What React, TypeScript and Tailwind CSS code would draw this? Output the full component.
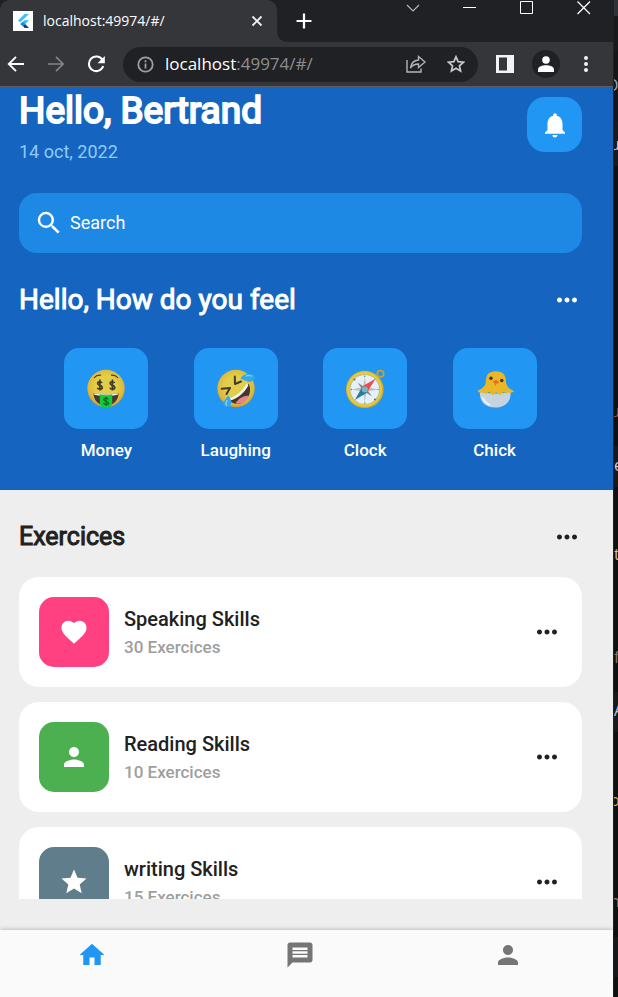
import type { ComponentType, ReactNode } from "react";
import {
  MdFavorite,
  MdHome,
  MdMessage,
  MdMoreHoriz,
  MdNotifications,
  MdPerson,
  MdSearch,
  MdStar,
} from "react-icons/md";

type IconType = ComponentType<{ size?: number; className?: string }>;

function FlutterLogo() {
  return (
    <span className="flex h-5 w-5 shrink-0 items-center justify-center bg-white">
      <svg width="16" height="16" viewBox="0 0 16 16" aria-hidden="true">
        <path d="M9.5 1H14L5.2 9.6 3 7.4z" fill="#42c0f5" />
        <path d="M9.5 7.3H14L10.2 11 8 13.2 5.2 11z" fill="#42b5f0" />
        <path d="M7.9 13.1L10.2 10.9 14 15H9.6z" fill="#0d3f91" />
        <path d="M5.5 11.1L7.8 8.9 10.1 11.1 7.8 13.3z" fill="#1b87d6" />
      </svg>
    </span>
  );
}

function WindowControls() {
  return (
    <div className="flex items-start pr-px text-white">
      <button type="button" aria-label="Search tabs" className="flex h-4 w-[57px] items-center justify-center">
        <svg width="14" height="14" viewBox="0 0 14 14" fill="none" stroke="#b5b6b8" strokeWidth="1.2">
          <path d="M1 4l6 6 6-6" />
        </svg>
      </button>
      <button type="button" aria-label="Minimize" className="flex h-4 w-[57px] items-center justify-center">
        <svg width="14" height="14" viewBox="0 0 14 14" fill="none" stroke="currentColor">
          <path d="M0 6.5h13" />
        </svg>
      </button>
      <button type="button" aria-label="Maximize" className="flex h-4 w-[57px] items-center justify-center">
        <svg width="14" height="14" viewBox="0 0 14 14" fill="none" stroke="currentColor">
          <path d="M.5.5h12v12H.5z" />
        </svg>
      </button>
      <button type="button" aria-label="Close window" className="flex h-4 w-[57px] items-center justify-center">
        <svg width="14" height="14" viewBox="0 0 14 14" fill="none" stroke="currentColor" strokeWidth="1.3">
          <path d="M.5.5l12.500 12.500M13 .5L.5 13" />
        </svg>
      </button>
    </div>
  );
}

function TabStrip() {
  return (
    <div className="flex h-[42px] bg-[#35363a]">
      <div className="w-[277px] bg-[#202124]">
        <div className="flex h-full items-center rounded-t-[10px] bg-[#35363a] pl-[13px] pr-[10px]">
          <FlutterLogo />
          <span className="ml-[10px] flex-1 text-[14px] leading-5 text-white">localhost:49974/#/</span>
          <button type="button" aria-label="Close tab" className="flex h-5 w-5 items-center justify-center">
            <svg width="12" height="12" viewBox="0 0 12 12" stroke="#f1f1f1" strokeWidth="1.9">
              <path d="M1.500 1.500l9 9M10.500 1.500l-9 9" />
            </svg>
          </button>
        </div>
      </div>
      <div className="flex flex-1 items-start justify-between rounded-bl-[10px] bg-[#202124]">
        <button type="button" aria-label="New tab" className="ml-4 flex h-[42px] w-[22px] items-center justify-center">
          <svg width="16" height="16" viewBox="0 0 16 16" stroke="#fff" strokeWidth="2.2">
            <path d="M8 .5v15M.5 8h15" />
          </svg>
        </button>
        <WindowControls />
      </div>
    </div>
  );
}

function Toolbar() {
  return (
    <div className="flex h-[45px] items-center border-b border-[#5c5d60] bg-[#35363a] pl-[6px] pr-[21px]">
      <button type="button" aria-label="Back" className="flex h-5 w-5 items-center justify-center">
        <svg width="18" height="18" viewBox="0 0 18 18" fill="none" stroke="#fff" strokeWidth="1.9">
          <path d="M17 9H2M9 1.800L1.800 9 9 16.200" />
        </svg>
      </button>
      <button type="button" aria-label="Forward" className="ml-5 flex h-5 w-5 items-center justify-center">
        <svg width="18" height="18" viewBox="0 0 18 18" fill="none" stroke="#838488" strokeWidth="1.7">
          <path d="M1 9h15M9 1.800L16.200 9 9 16.200" />
        </svg>
      </button>
      <button type="button" aria-label="Reload" className="ml-5 flex h-5 w-5 items-center justify-center">
        <svg width="18" height="18" viewBox="0 0 18 18">
          <path
            d="M15.600 5.200A7.300 7.300 0 1 0 16.200 11"
            fill="none"
            stroke="#fff"
            strokeWidth="2"
          />
          <path d="M17.800 1v7.200h-7.200z" fill="#fff" />
        </svg>
      </button>
      <div className="ml-[17px] flex h-[35px] min-w-0 flex-1 items-center rounded-full bg-[#202124] pl-[14px] pr-3">
        <svg width="17" height="17" viewBox="0 0 17 17" fill="none" stroke="#9aa0a6" strokeWidth="1.8" className="shrink-0">
          <circle cx="8.500" cy="8.500" r="7.200" />
          <path d="M8.500 7.500v5M8.500 4.300v2" />
        </svg>
        <span className="ml-[11px] flex-1 text-[17px] leading-6 text-[#8b8e92]">
          <span className="text-white">localhost</span>:49974/#/
        </span>
        <button type="button" aria-label="Share" className="flex h-5 w-5 items-center justify-center">
          <svg width="20" height="18" viewBox="0 0 20 18" fill="none" stroke="#b3b5b8" strokeWidth="1.4">
            <path d="M1 5v12h14v-3.500" />
            <path d="M4.500 13c.5-4.800 3-7.500 8-8V1.500L19 7l-6.500 5.500V9c-3.500 0-6 1-8 4z" />
          </svg>
        </button>
        <button type="button" aria-label="Bookmark" className="ml-5 flex h-5 w-5 items-center justify-center">
          <svg width="18" height="18" viewBox="0 0 18 18" fill="none" stroke="#c6c8ca" strokeWidth="1.7">
            <path d="M9 1.800l2.150 4.900 5.300.5-4 3.550 1.150 5.250L9 13.250 4.400 16l1.150-5.250-4-3.550 5.300-.5z" />
          </svg>
        </button>
      </div>
      <button type="button" aria-label="Side panel" className="ml-[18px] flex h-[18px] w-[18px] items-center justify-center">
        <svg width="18" height="18" viewBox="0 0 18 18">
          <path d="M0 0h18v18H0z" fill="#f1f3f4" />
          <path d="M3 2.500h8v13H3z" fill="#35363a" />
        </svg>
      </button>
      <button
        type="button"
        aria-label="Profile"
        className="ml-[18px] flex h-7 w-7 items-center justify-center rounded-full bg-[#202124]"
      >
        <svg width="16" height="16" viewBox="0 0 16 16" fill="#fff">
          <circle cx="8" cy="4" r="3.800" />
          <path d="M0 16v-2.500C0 10.500 4.500 9.300 8 9.300s8 1.200 8 4.200V16z" />
        </svg>
      </button>
      <button type="button" aria-label="Browser menu" className="ml-5 flex h-5 w-3 items-center justify-center">
        <svg width="4" height="16" viewBox="0 0 4 16" fill="#f1f3f4">
          <circle cx="2" cy="2" r="2" />
          <circle cx="2" cy="8" r="2" />
          <circle cx="2" cy="14" r="2" />
        </svg>
      </button>
    </div>
  );
}

function Face({ children }: { children: ReactNode }) {
  return (
    <svg width="40" height="40" viewBox="0 0 40 40" aria-hidden="true">
      <defs>
        <radialGradient id="face" cx=".5" cy=".45" r=".55">
          <stop offset=".5" stopColor="#e2cf49" />
          <stop offset=".85" stopColor="#ddb93c" />
          <stop offset="1" stopColor="#cf9a35" />
        </radialGradient>
      </defs>
      <circle cx="20" cy="19.500" r="18.700" fill="url(#face)" />
      {children}
    </svg>
  );
}

function MoneyFace() {
  return (
    <Face>
      <g fill="none" stroke="#45382c" strokeWidth="1.200" strokeLinecap="round">
        <path d="M8.500 8.500c1.500-2 3.500-2.600 6-2.400M31.500 8.500c-1.500-2-3.500-2.600-6-2.400" />
      </g>
      <g fill="none" stroke="#45382c" strokeWidth="1.700">
        <path d="M16 14c-.5-1.300-4.300-1.700-4.300.5 0 2.300 4.600 1.500 4.600 4 0 2.300-4.300 2-4.900.2M13.900 10.500v11" />
        <path d="M28.500 14c-.5-1.300-4.300-1.700-4.300.5 0 2.300 4.600 1.500 4.600 4 0 2.300-4.300 2-4.900.2M26.400 10.500v11" />
      </g>
      <path d="M7.500 24c8 2 17 2 25 0 0 7.500-5 12.500-12.500 12.500S7.500 31.500 7.500 24z" fill="#4b382e" />
      <path d="M8 24.200c8 1.800 16 1.800 24 0l-.3 1.500c-7.500 1.600-15.700 1.600-23.400 0z" fill="#f2f2ee" />
      <path d="M13.800 25.600c4 .7 8.400.7 12.400 0v7.600c0 3.500-2.500 6-6.200 6s-6.200-2.500-6.200-6z" fill="#0fce35" />
      <path
        d="M22.400 30.200c-.5-1.300-4.600-1.500-4.600.5 0 2.100 4.700 1.300 4.700 3.500 0 2-4.400 1.700-5 .1M20.100 27.500v9.300"
        fill="none"
        stroke="#176b2b"
        strokeWidth="1.400"
      />
    </Face>
  );
}

function LaughingFace() {
  return (
    <Face>
      <g fill="none" stroke="#45382c" strokeWidth="2" strokeLinecap="round" strokeLinejoin="round">
        <path d="M18.800 7.500l.2 7.500 6-2.500M5.800 19.800l8.200-.8-3.500 6" />
      </g>
      <path d="M13.500 31.500C21 29 28 23.500 32.500 14.500c3.500 6.500 1 14.500-5 18.500-4.500 2.800-10 2.500-14-1.500z" fill="#45372f" />
      <path d="M19.500 34.500c2-4 8-8.500 13.500-7.500-1.500 4-7 8.500-13.500 7.500z" fill="#e5848b" />
      <path d="M12.800 29.500C20.500 27 26.500 22 30.800 14.200l1.600 2.300C28 24 22 29 14.500 31.500z" fill="#f4f5f2" />
      <path d="M24.500 9.500c2-4.500 8-5.500 13-3.500 1.800 1 1.300 4-.5 5.500-3.500 3-7 .2-12.500-2z" fill="#35a8ec" />
      <path d="M12 26.500c4 4.500 4.500 9 1 11-1.500 1-4 .5-5-1-2-3.500 2-6 4-10z" fill="#35a8ec" />
      <path
        d="M30 7c2-1 4-.8 5.500 0M11.200 31.500c-1.500 2-1.800 3.500-.6 4.500"
        fill="none"
        stroke="#85d0f7"
        strokeWidth="1.300"
        strokeLinecap="round"
      />
    </Face>
  );
}

function Compass() {
  return (
    <svg width="40" height="40" viewBox="0 0 40 40" aria-hidden="true">
      <circle cx="35.500" cy="4.800" r="3.200" fill="none" stroke="#c6a12f" strokeWidth="1.700" />
      <circle cx="19.800" cy="20.500" r="18.800" fill="#cfae2c" />
      <circle cx="19.400" cy="20.200" r="17.600" fill="#e5ca45" />
      <circle cx="19.800" cy="20.500" r="15" fill="#a9aa83" />
      <circle cx="19.800" cy="20.500" r="14.400" fill="#e3f1fc" />
      <path
        d="M19.800 7.500l1.500 10.200 11.500 2.800-11.500 2.300-1.500 10.700-1.600-10.700L7 20.500l11.200-2.800z"
        fill="#c4bfba"
      />
      <path d="M12.500 13.500l8.500 5.500 6 8.500-8.500-5.500z" fill="#8d8681" />
      <path d="M30.500 9.800L22.700 22.500l-5.200-5.200z" fill="#e94d50" />
      <path d="M9.800 31L17 18.200l5.400 5.400z" fill="#267d94" />
      <circle cx="19.800" cy="20.500" r="3" fill="#72b8cb" />
      <g fill="#66757d">
        <circle cx="9.500" cy="10.500" r="1.100" />
        <circle cx="30" cy="30.500" r="1.100" />
        <circle cx="19.800" cy="7.200" r=".7" />
        <circle cx="19.800" cy="34" r=".7" />
        <circle cx="6.500" cy="20.500" r=".7" />
        <circle cx="33" cy="20.500" r=".7" />
      </g>
    </svg>
  );
}

function Chick() {
  return (
    <svg width="40" height="40" viewBox="0 0 40 40" aria-hidden="true">
      <path d="M5 22.500c8 2.500 22 2.500 30.500 0 1 9.500-5 16-15.200 16S4 32 5 22.500z" fill="#c5d4e0" />
      <path d="M7.500 29c1.800 3.500 4 5.500 7 7" fill="none" stroke="#e9f1f7" strokeWidth="2" strokeLinecap="round" />
      <path
        d="M10.800 13c0-7.500 3-10.800 10-10.800s10.200 3.300 10.200 10.800c0 3.200 2.500 6.500 7.500 8.800 1.200 1-1 2-5 1.800l-1.800 1.200-3-2-3.500 3.400-4-3-3.500 3.300-3.500-3.800-3 2.200-2.400-1.300c-4.500.3-7-.8-5.500-2.300 4.500-1.800 7.500-4.800 7.500-8.300z"
        fill="#e9b728"
      />
      <circle cx="16" cy="9.300" r="1.700" fill="#42352b" />
      <circle cx="26.800" cy="11.500" r="1.700" fill="#42352b" />
      <path d="M17.500 12.500l3.800-1.700 3.300 2.700-2.800 1-1.500 2.500-.9-3z" fill="#ed6c22" />
    </svg>
  );
}

const moods: { name: string; Picture: ComponentType }[] = [
  { name: "Money", Picture: MoneyFace },
  { name: "Laughing", Picture: LaughingFace },
  { name: "Clock", Picture: Compass },
  { name: "Chick", Picture: Chick },
];

const exercises: { title: string; count: number; color: string; Icon: IconType }[] = [
  { title: "Speaking Skills", count: 30, color: "bg-[#ff4081]", Icon: MdFavorite },
  { title: "Reading Skills", count: 10, color: "bg-[#4caf50]", Icon: MdPerson },
  { title: "writing Skills", count: 15, color: "bg-[#607d8b]", Icon: MdStar },
];

function MoreButton({ label }: { label: string }) {
  return (
    <button type="button" aria-label={label}>
      <MdMoreHoriz size={30} />
    </button>
  );
}

function Header() {
  return (
    <header className="bg-[#1565c0] pt-[10px] pr-[31px] pb-[30px] pl-[19px] text-white">
      <div className="flex items-start justify-between">
        <div className="-mt-2">
          <h1 className="text-[37px] leading-[43px] font-normal [-webkit-text-stroke:2px]">Hello, Bertrand</h1>
          <p className="mt-[10px] text-[18px] leading-5 text-[#90caf9]">14 oct, 2022</p>
        </div>
        <button
          type="button"
          aria-label="Notifications"
          className="flex h-[55px] w-[55px] items-center justify-center rounded-[18px] bg-[#2196f3]"
        >
          <MdNotifications size={30} />
        </button>
      </div>
      <label className="mt-[31px] flex h-[60px] items-center rounded-[18px] bg-[#1e88e5] pl-[15px] pr-4">
        <MdSearch size={30} className="shrink-0" />
        <input
          type="text"
          aria-label="Search"
          placeholder="Search"
          className="ml-[6px] min-w-0 flex-1 bg-transparent text-[18px] leading-6 outline-none placeholder:text-white"
        />
      </label>
      <div className="mt-[29px] flex items-center justify-between">
        <h2 className="text-[28px] leading-9 font-normal [-webkit-text-stroke:1px]">Hello, How do you feel</h2>
        <MoreButton label="More moods" />
      </div>
      <div className="mt-[30px] flex justify-evenly">
        {moods.map(({ name, Picture }) => (
          <button key={name} type="button" className="flex w-[84px] flex-col items-center">
            <span className="flex h-[81px] w-full items-center justify-center rounded-[15px] bg-[#2196f3]">
              <Picture />
            </span>
            <span className="mt-[11px] text-[17px] leading-5 font-medium">{name}</span>
          </button>
        ))}
      </div>
    </header>
  );
}

function Exercises() {
  return (
    <section className="flex min-h-0 flex-1 flex-col pt-[29px] pr-[31px] pb-[31px] pl-[19px] text-[#212121]">
      <div className="flex items-center justify-between">
        <h2 className="text-[25px] leading-9 font-normal [-webkit-text-stroke:1px]">Exercices</h2>
        <MoreButton label="More exercises" />
      </div>
      <ul className="mt-[22px] flex min-h-0 flex-1 flex-col gap-[15px] overflow-hidden">
        {exercises.map(({ title, count, color, Icon }) => (
          <li key={title} className="flex h-[110px] shrink-0 items-center rounded-[20px] bg-white px-5">
            <span className={`flex h-[70px] w-[70px] shrink-0 items-center justify-center rounded-[15px] text-white ${color}`}>
              <Icon size={30} />
            </span>
            <div className="ml-[15px] flex-1 pt-[2px]">
              <h3 className="text-[20px] leading-7 font-medium">{title}</h3>
              <p className="text-[17px] leading-7 font-medium text-[#9e9e9e]">{count} Exercices</p>
            </div>
            <MoreButton label={`More about ${title}`} />
          </li>
        ))}
      </ul>
    </section>
  );
}

function BottomNav() {
  return (
    <nav className="z-10 grid h-[67px] shrink-0 grid-cols-[46fr_58fr_46fr] items-start justify-items-center bg-[#fafafa] pt-[10px] pr-[13px] text-[#757575] shadow-[0_-1px_4px_rgba(0,0,0,0.2)]">
      <button type="button" aria-label="Home" className="text-[#2196f3]">
        <MdHome size={30} />
      </button>
      <button type="button" aria-label="Messages">
        <MdMessage size={30} />
      </button>
      <button type="button" aria-label="Profile">
        <MdPerson size={30} />
      </button>
    </nav>
  );
}

const editorRows: { text: string; row: string; color: string }[] = [
  { text: "", row: "h-4", color: "bg-[#2f3337]" },
  { text: "", row: "h-[35px]", color: "bg-[#191a1c]" },
  { text: "O", row: "h-[70px] pt-[24px] -indent-2", color: "bg-[#141617] text-[#a7a9ab]" },
  { text: "u", row: "h-[45px] pt-[13px] -indent-1", color: "bg-[#191a1c] text-[#d3cdbf]" },
  { text: "u", row: "h-[280px] pt-[235px] -indent-1", color: "bg-[#0d1110] text-[#a34e3f]" },
  { text: "e", row: "h-[41px] pt-[9px]", color: "bg-[#17191b] text-[#cfd3d6]" },
  { text: "t", row: "h-[100px] pt-[57px]", color: "bg-[#0d1110] text-[#c8c0b0]" },
  { text: "f", row: "h-[105px] pt-[60px]", color: "bg-[#0d1110] text-[#8a7a60]" },
  { text: "A", row: "h-10 pt-[8px]", color: "bg-[#17191b] text-[#a9cbe6]" },
  { text: "o", row: "h-[100px] pt-[58px] -indent-1", color: "bg-[#0d1110] text-[#d8a54b]" },
  { text: "n", row: "h-[105px] pt-[59px] -indent-1", color: "bg-[#0d1110] text-[#8a7a60]" },
  { text: "", row: "h-10", color: "bg-[#17191b]" },
  { text: "", row: "flex-1", color: "bg-[#0d1110]" },
];

function EditorEdge() {
  return (
    <div className="flex w-[5px] shrink-0 flex-col overflow-hidden border-l border-[#1c2420]" aria-hidden="true">
      {editorRows.map(({ text, row, color }, index) => (
        <div key={index} className={`shrink-0 overflow-hidden text-[16px] leading-5 ${row} ${color}`}>
          {text}
        </div>
      ))}
    </div>
  );
}

export default function App() {
  return (
    <div className="flex h-screen overflow-hidden bg-[#0d1110] font-['Open_Sans',sans-serif]">
      <div className="flex min-w-0 flex-1 flex-col bg-[#eeeeee]">
        <TabStrip />
        <Toolbar />
        <main className="flex min-h-0 flex-1 flex-col font-['Roboto',sans-serif]">
          <Header />
          <Exercises />
          <BottomNav />
        </main>
      </div>
      <EditorEdge />
    </div>
  );
}
